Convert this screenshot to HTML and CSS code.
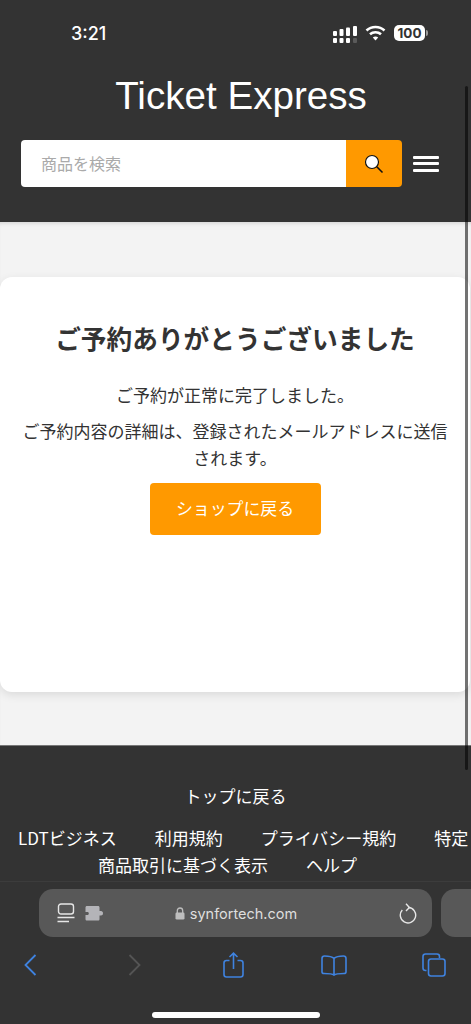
FILE: index.html
```html
<!DOCTYPE html>
<html lang="ja">
<head>
<meta charset="utf-8">
<title>Ticket Express</title>
<link rel="stylesheet" href="styles.css">
</head>
<body>
<div class="screen">
  <header class="header">
    <div class="status">
      <span class="time">3:21</span>
      <div class="status-icons">
        <svg class="ic-signal" width="24" height="17" viewBox="0 0 24 17" fill="#fff">
          <rect x="0" y="5" width="4" height="5" rx="1"/><rect x="6.500" y="3" width="4" height="7" rx="1"/><rect x="13" y="1.500" width="4" height="8.500" rx="1"/><rect x="20" y="0" width="4" height="10" rx="1"/>
          <rect x="0" y="12" width="4" height="5" rx="1"/><rect x="6.500" y="12" width="4" height="5" rx="1"/><rect x="13" y="12" width="4" height="5" rx="1"/><rect x="20" y="12" width="4" height="5" rx="1" fill="#5a5a5a"/>
        </svg>
        <svg class="ic-wifi" width="21" height="16" viewBox="0 0 21 16" fill="none" stroke="#fff" stroke-width="2.600">
          <path d="M1.500 5.500C6.500 .8 14.500 .8 19.500 5.500"/><path d="M5 9.200C8 6.500 13 6.500 16 9.200"/><path d="M10.500 15.500 7.800 12.500C9.300 11.300 11.700 11.300 13.200 12.500Z" fill="#fff" stroke="none"/>
        </svg>
        <div class="battery"><span class="battery-level">100</span><i class="battery-cap"></i></div>
      </div>
    </div>
    <h1 class="brand">Ticket Express</h1>
    <div class="search-row">
      <form class="search">
        <span class="search-input">商品を検索</span>
        <span class="search-btn">
          <svg width="20" height="20" viewBox="0 0 20 20">
            <circle cx="8" cy="8" r="6.500" fill="#fff" stroke="#111" stroke-width="1.200"/>
            <path d="M12.800 12.800 18.500 18.500" stroke="#111" stroke-width="1.600" fill="none"/>
          </svg>
        </span>
      </form>
      <div class="burger"><i></i><i></i><i></i></div>
    </div>
  </header>

  <main class="main">
    <section class="card">
      <h2 class="card-title">ご予約ありがとうございました</h2>
      <p class="card-text">ご予約が正常に完了しました。</p>
      <p class="card-text">ご予約内容の詳細は、登録されたメールアドレスに送信されます。</p>
      <a class="btn">ショップに戻る</a>
    </section>
  </main>

  <footer class="footer">
    <p class="to-top">トップに戻る</p>
    <nav class="foot-links">
      <div class="foot-row foot-row-a"><a>LDTビジネス</a><a>利用規約</a><a>プライバシー規約</a><a>特定</a></div>
      <div class="foot-row foot-row-b"><a>商品取引に基づく表示</a><a>ヘルプ</a></div>
    </nav>
  </footer>

  <div class="chrome">
    <div class="url-row">
      <div class="url-bar">
        <svg class="ic-reader" width="18" height="20" viewBox="0 0 18 20" fill="none" stroke="#e6e6e6" stroke-width="1.400">
          <rect x="1.500" y="1" width="15" height="10" rx="2.500"/><path d="M.5 14.500H17.500M.5 18.500H12"/>
        </svg>
        <svg class="ic-ext" width="18" height="15" viewBox="0 0 18 15">
          <path fill="#b4b4b8" d="M2 0H13C14 0 14.500.6 14.500 1.500V5H16C17.200 5 18 6 18 7.200 18 8.500 17.200 9.500 16 9.500H14.500V13C14.500 14 14 14.500 13 14.500H2C1 14.500.5 14 .5 13V9H2.500C3.300 9 3.800 8.300 3.800 7.500 3.800 6.700 3.300 6 2.500 6H.5V1.500C.5.600 1 0 2 0Z"/>
        </svg>
        <div class="url-text">
          <svg width="10" height="13" viewBox="0 0 10 13">
            <path fill="none" stroke="#bdbdbd" stroke-width="1.300" d="M2.300 6V3.800C2.300 2 3.500 1 5 1S7.700 2 7.700 3.800V6"/>
            <rect x=".5" y="5.500" width="9" height="7" rx="1.300" fill="#bdbdbd"/>
          </svg>
          <span>synfortech.com</span>
        </div>
        <svg class="ic-reload" width="18" height="21" viewBox="0 0 18 21" fill="none" stroke="#e6e6e6" stroke-width="1.400">
          <path d="M9.500 4.500A7.700 7.700 0 1 1 3.300 7"/><path d="M7 .8 10.400 4.400 7 8"/>
        </svg>
      </div>
      <div class="next-tab"></div>
    </div>
    <div class="tools">
      <svg class="tool-back" width="13" height="22" viewBox="0 0 13 22" fill="none" stroke="#3f83e0" stroke-width="1.800"><path d="M11.500 1 1.500 11 11.500 21"/></svg>
      <svg class="tool-forward" width="13" height="22" viewBox="0 0 13 22" fill="none" stroke="#555" stroke-width="1.800"><path d="M1.500 1 11.500 11 1.500 21"/></svg>
      <svg class="tool-share" width="21" height="26" viewBox="0 0 21 26" fill="none" stroke="#3f83e0" stroke-width="1.600"><path d="M6.500 8.500H3.500C2 8.500 1 9.500 1 11V22.500C1 24 2 25 3.500 25H17.500C19 25 20 24 20 22.500V11C20 9.500 19 8.500 17.500 8.500H14.500"/><path d="M10.500 17V1.500M6.500 5 10.500 1.200 14.500 5"/></svg>
      <svg class="tool-book" width="26" height="21" viewBox="0 0 26 21" fill="none" stroke="#3f83e0" stroke-width="1.600"><path d="M13 3.500C11 1.500 8 1 3.500 1 2 1 1 2 1 3.500V17C1 18 1.800 18.500 3 18.500 7.500 18.500 11 18.500 13 20 15 18.500 18.500 18.500 23 18.500 24.200 18.500 25 18 25 17V3.500C25 2 24 1 22.500 1 18 1 15 1.500 13 3.500ZM13 3.500V20"/></svg>
      <svg class="tool-tabs" width="24" height="24" viewBox="0 0 24 24" fill="none" stroke="#3f83e0" stroke-width="1.600"><path d="M4.500 17.500H3.500C2 17.500 1 16.500 1 15V3.500C1 2 2 1 3.500 1H15C16.500 1 17.500 2 17.500 3.500V5"/><rect x="6.500" y="6" width="16.500" height="17" rx="2.500"/></svg>
    </div>
    <div class="home-bar"></div>
  </div>

  <div class="scrollbar"></div>
</div>
</body>
</html>
```
FILE: styles.css
```css
* { box-sizing: border-box; }
html, body { margin: 0; padding: 0; }
body {
  font-family: "Noto Sans CJK JP", "Noto Sans", sans-serif;
  background: #333;
}
.screen {
  position: relative;
  width: 471px;
  height: 1024px;
  overflow: hidden;
  display: flex;
  flex-direction: column;
}

/* header */
.header {
  flex: none;
  height: 222px;
  background: #333;
  color: #fff;
  display: flex;
  flex-direction: column;
}
.status {
  height: 68px;
  padding: 22px 43px 0 71px;
  display: flex;
  justify-content: space-between;
  align-items: flex-start;
}
.time {
  font-family: Inter, "Liberation Sans", sans-serif;
  font-size: 18px;
  font-weight: 500;
  line-height: 24px;
}
.status-icons {
  display: flex;
  align-items: flex-start;
  gap: 8px;
  padding-top: 3px;
}
.ic-signal { margin-top: 1px; }
.battery { display: flex; align-items: center; gap: 1px; }
.battery-level {
  width: 31px;
  height: 16px;
  border-radius: 5px;
  background: #fff;
  color: #333;
  font-family: Inter, "Liberation Sans", sans-serif;
  font-size: 13.500px;
  font-weight: 700;
  line-height: 16px;
  text-align: center;
}
.battery-cap {
  width: 2px;
  height: 6px;
  border-radius: 0 2px 2px 0;
  background: #999;
}
.brand {
  margin: 0;
  height: 54px;
  font-family: "Liberation Sans", Arial, sans-serif;
  font-size: 38.6px;
  font-weight: 400;
  line-height: 56px;
  text-align: center;
  padding-left: 11px;
}
.search-row {
  margin-top: 18px;
  padding-left: 21px;
  display: flex;
  align-items: center;
}
.search {
  width: 381px;
  height: 47px;
  display: flex;
  border-radius: 4px;
  overflow: hidden;
}
.search-input {
  flex: 1;
  background: #fff;
  color: #aaa;
  font-size: 16px;
  line-height: 47px;
  padding-left: 20px;
}
.search-btn {
  width: 56px;
  background: #f90;
  display: flex;
  align-items: center;
  justify-content: center;
}
.burger {
  margin-left: 11px;
  width: 26px;
  display: flex;
  flex-direction: column;
  gap: 3.500px;
}
.burger i {
  display: block;
  height: 3px;
  border-radius: 1px;
  background: #fff;
}

/* main */
.main {
  flex: none;
  height: 523px;
  background: #f3f3f3;
  padding: 55px 1px 0 0;
  box-shadow: inset 0 4px 4px -3px rgba(0, 0, 0, .15);
}
.card {
  height: 415px;
  background: #fff;
  border-radius: 12px;
  box-shadow: 0 3px 10px rgba(0, 0, 0, .1);
  padding: 42px 20px 0;
  display: flex;
  flex-direction: column;
  align-items: center;
  text-align: center;
  color: #333;
}
.card-title {
  margin: 0 0 24px;
  font-size: 25.700px;
  font-weight: 700;
  line-height: 38px;
  white-space: nowrap;
}
.card-text {
  margin: 0 0 9px;
  font-size: 17px;
  line-height: 27px;
  width: 430px;
}
.btn {
  margin-top: 3px;
  width: 171px;
  height: 52px;
  border-radius: 4px;
  background: #f90;
  color: #fff;
  font-size: 16.900px;
  line-height: 50px;
}

/* footer */
.footer {
  flex: none;
  height: 136px;
  background: #333;
  border-top: 1px solid #777;
  color: #fff;
  text-align: center;
  font-size: 17px;
  line-height: 27px;
  overflow: hidden;
}
.to-top { margin: 36px 0 0; }
.foot-links { margin-top: 15px; }
.foot-row {
  display: flex;
  gap: 38px;
  white-space: nowrap;
  line-height: 27px;
}
.foot-row-a { padding-left: 18px; }
.foot-row-b { padding-left: 98px; }

/* browser chrome */
.chrome {
  flex: 1;
  background: #333;
  border-top: 1px solid #3c3c3c;
  display: flex;
  flex-direction: column;
}
.url-row {
  margin-top: 7px;
  padding-left: 39px;
  display: flex;
  gap: 9px;
}
.url-bar {
  flex: none;
  width: 393px;
  height: 48px;
  border-radius: 14px;
  background: #585858;
  padding: 0 15px 0 18px;
  display: flex;
  align-items: center;
}
.ic-ext { margin-left: 10px; }
.url-text {
  flex: 1;
  display: flex;
  align-items: center;
  justify-content: center;
  gap: 5px;
  color: #dedede;
  font-family: Inter, "Liberation Sans", sans-serif;
  font-size: 14.500px;
  padding-right: 30px;
}
.next-tab {
  flex: none;
  width: 60px;
  height: 48px;
  border-radius: 14px;
  background: #585858;
}
.tools {
  margin-top: 13px;
  height: 30px;
  padding-left: 24px;
  display: flex;
  align-items: center;
}
.tool-forward { margin-left: 91px; }
.tool-share { margin-left: 82px; }
.tool-book { margin-left: 77px; }
.tool-tabs { margin-left: 75px; }
.home-bar {
  margin: 32px auto 0;
  width: 168px;
  height: 6px;
  border-radius: 3px;
  background: #fff;
}

/* overlay scrollbar */
.scrollbar {
  position: absolute;
  top: 86px;
  left: 465px;
  width: 3px;
  height: 684px;
  border-radius: 2px;
  background: rgba(0, 0, 0, .55);
}
```
